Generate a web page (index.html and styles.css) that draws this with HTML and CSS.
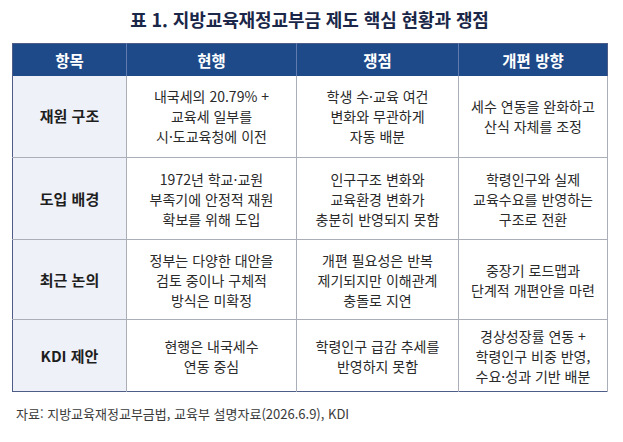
FILE: index.html
```html
<!DOCTYPE html>
<html lang="ko">
<head>
<meta charset="utf-8">
<link rel="stylesheet" href="styles.css">
</head>
<body>
<div class="page">
  <h1 class="title">표 1. 지방교육재정교부금 제도 핵심 현황과 쟁점</h1>
  <table class="grid">
    <colgroup>
      <col class="c1"><col class="c2"><col class="c3"><col class="c4">
    </colgroup>
    <thead>
      <tr class="head">
        <th>항목</th><th>현행</th><th>쟁점</th><th>개편 방향</th>
      </tr>
    </thead>
    <tbody>
      <tr class="r1">
        <td class="label">재원 구조</td>
        <td>내국세의 20.79% +<br>교육세 일부를<br>시·도교육청에 이전</td>
        <td>학생 수·교육 여건<br>변화와 무관하게<br>자동 배분</td>
        <td>세수 연동을 완화하고<br>산식 자체를 조정</td>
      </tr>
      <tr class="r2">
        <td class="label">도입 배경</td>
        <td>1972년 학교·교원<br>부족기에 안정적 재원<br>확보를 위해 도입</td>
        <td>인구구조 변화와<br>교육환경 변화가<br>충분히 반영되지 못함</td>
        <td>학령인구와 실제<br>교육수요를 반영하는<br>구조로 전환</td>
      </tr>
      <tr class="r3">
        <td class="label">최근 논의</td>
        <td>정부는 다양한 대안을<br>검토 중이나 구체적<br>방식은 미확정</td>
        <td>개편 필요성은 반복<br>제기되지만 이해관계<br>충돌로 지연</td>
        <td>중장기 로드맵과<br>단계적 개편안을 마련</td>
      </tr>
      <tr class="r4">
        <td class="label">KDI 제안</td>
        <td>현행은 내국세수<br>연동 중심</td>
        <td>학령인구 급감 추세를<br>반영하지 못함</td>
        <td>경상성장률 연동 +<br>학령인구 비중 반영,<br>수요·성과 기반 배분</td>
      </tr>
    </tbody>
  </table>
  <p class="source">자료: 지방교육재정교부금법, 교육부 설명자료(2026.6.9), KDI</p>
</div>
</body>
</html>
```
FILE: styles.css
```css
* { box-sizing: border-box; }
html, body {
  margin: 0;
  padding: 0;
  background: #ffffff;
}
body {
  font-family: "Noto Sans CJK KR", "Noto Sans", sans-serif;
  color: #2a2a2a;
}
.page {
  width: 623px;
  height: 442px;
  padding: 0 16px 0 12px;
}
.title {
  margin: 0;
  height: 43px;
  padding-top: 5px;
  font-size: 18px;
  line-height: 28px;
  font-weight: 700;
  color: #1b2748;
  text-align: center;
  letter-spacing: -0.1px;
}
.grid {
  width: 595px;
  border-collapse: collapse;
  table-layout: fixed;
  border: 1.5px solid #4e5d88;
}
.c1 { width: 114px; }
.c2 { width: 170px; }
.c3 { width: 162px; }
.c4 { width: 149px; }
.head {
  height: 32px;
  background: #1e4a8a;
}
.head th {
  color: #ffffff;
  font-size: 15.5px;
  font-weight: 700;
  text-align: center;
  vertical-align: middle;
  padding: 0;
  border-left: 1px solid #5f7bb0;
  line-height: 20px;
}
.head th:first-child { border-left: none; }
td {
  border: 1px solid #a9aeb8;
  text-align: center;
  vertical-align: middle;
  font-size: 14px;
  line-height: 20px;
  padding: 0 4px;
  color: #2a2a2a;
}
td.label {
  background: #eef1f8;
  font-weight: 700;
  font-size: 15px;
  color: #1e1e1e;
  border-left: none;
}
.r1 { height: 82px; }
.r2 { height: 82px; }
.r3 { height: 80px; }
.r4 { height: 72px; }
.r4 td { border-bottom: none; }
.r1 td { border-top: none; }
.source {
  margin: 13px 0 0 4px;
  font-size: 13px;
  line-height: 18px;
  color: #3a3a3a;
}
```
